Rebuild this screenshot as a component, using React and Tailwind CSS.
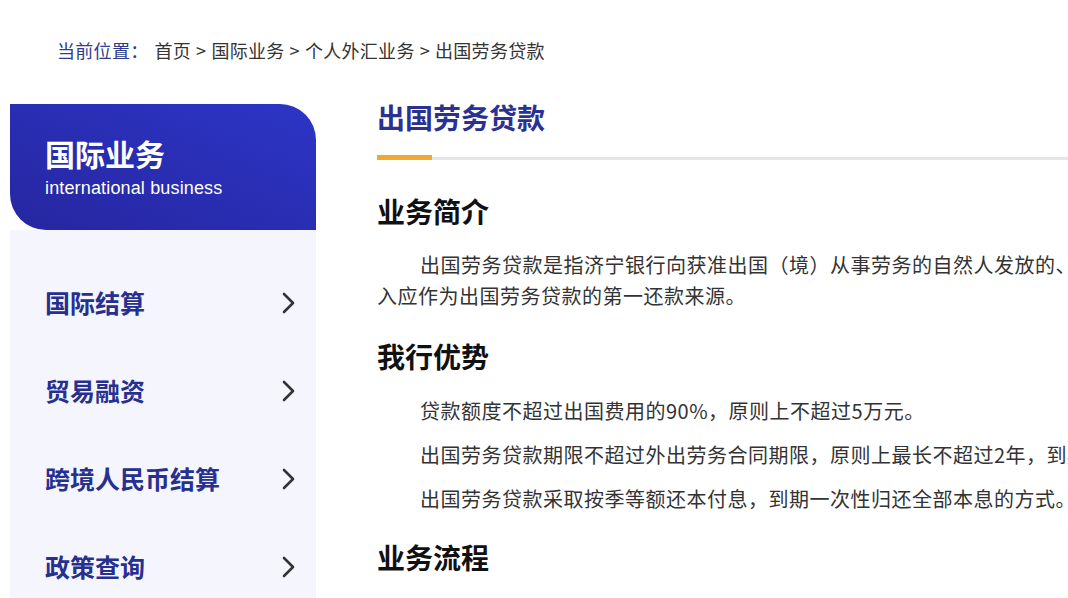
const menu = ['国际结算', '贸易融资', '跨境人民币结算', '政策查询'];

const crumbs = ['首页', '国际业务', '个人外汇业务', '出国劳务贷款'];

const advantages = [
  '贷款额度不超过出国费用的90%，原则上不超过5万元。',
  '出国劳务贷款期限不超过外出劳务合同期限，原则上最长不超过2年，到期后不得展期。',
  '出国劳务贷款采取按季等额还本付息，到期一次性归还全部本息的方式。',
];

function Chevron() {
  return (
    <svg width="13" height="22" viewBox="0 0 13 22" fill="none" className="shrink-0">
      <polyline
        points="2,2 11,11 2,20"
        stroke="#333"
        strokeWidth="2.6"
        strokeLinecap="round"
        strokeLinejoin="round"
      />
    </svg>
  );
}

export default function App() {
  return (
    <div
      className="w-[1068px] h-[598px] overflow-hidden bg-white text-[#333]"
      style={{ fontFamily: '"Noto Sans CJK SC", "Liberation Sans", sans-serif' }}
    >
      {/* Breadcrumb */}
      <div className="pl-[57px] pt-[38px] h-[103px] text-[18px] leading-[24px] tracking-[0.3px] whitespace-nowrap flex">
        <span className="text-[#2e3b8f] mr-[6px]">当前位置：</span>
        {crumbs.map((c, i) => (
          <span key={c}>
            {i > 0 && <span className="mx-[5px]">&gt;</span>}
            {c}
          </span>
        ))}
      </div>

      <div className="flex pl-[10px]">
        {/* Sidebar */}
        <aside className="w-[306px] shrink-0 mt-[1px]">
          <div className="h-[126px] rounded-tr-[36px] rounded-bl-[36px] bg-linear-to-tr from-[#2626a0] to-[#2c35c6] pl-[35px] pt-[34px] text-white">
            <h2 className="text-[30px] leading-[30px] font-bold">国际业务</h2>
            <p
              className="mt-[11px] text-[18px] leading-[18px] tracking-[0.15px]"
              style={{ fontFamily: '"Liberation Sans", Arial, sans-serif' }}
            >
              international business
            </p>
          </div>
          <ul className="bg-[#f5f6fd] pt-[29px] h-[400px]">
            {menu.map((m) => (
              <li key={m} className="h-[88px] flex items-center justify-between pl-[35px] pr-[21px]">
                <span className="text-[25px] font-bold text-[#28308f]">{m}</span>
                <Chevron />
              </li>
            ))}
          </ul>
        </aside>

        {/* Content */}
        <main className="ml-[61px] flex-1 min-w-0 overflow-hidden">
          <h1 className="text-[28px] leading-[28px] font-bold text-[#2b3190]">出国劳务贷款</h1>
          <div className="mt-[24px] flex items-end">
            <div className="w-[55px] h-[5px] bg-[#f0a833]" />
            <div className="flex-1 h-[3px] bg-[#e6e6e6]" />
          </div>

          <h3 className="mt-[37px] text-[28px] leading-[28px] font-bold text-[#111]">业务简介</h3>
          <p className="mt-[24px] text-[20px] leading-[31px] tracking-[0.5px] whitespace-nowrap">
            <span className="inline-block pl-[43px]">出国劳务贷款是指济宁银行向获准出国（境）从事劳务的自然人发放的、用于支付出国费用的人民币贷款，借款人在境外的劳务收</span>
            <br />
            入应作为出国劳务贷款的第一还款来源。
          </p>

          <h3 className="mt-[31px] text-[28px] leading-[28px] font-bold text-[#111]">我行优势</h3>
          <ul className="mt-[19px] text-[20px] leading-[44px] tracking-[0.5px] whitespace-nowrap">
            {advantages.map((a) => (
              <li key={a} className="pl-[43px]">{a}</li>
            ))}
          </ul>

          <h3 className="mt-[22px] text-[28px] leading-[28px] font-bold text-[#111]">业务流程</h3>
        </main>
      </div>
    </div>
  );
}
